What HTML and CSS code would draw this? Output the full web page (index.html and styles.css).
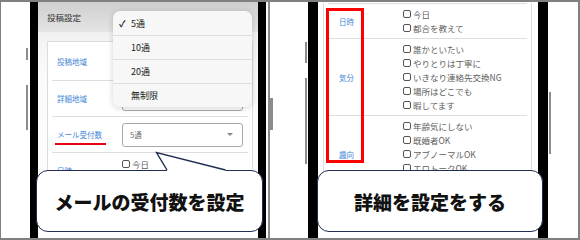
FILE: index.html
```html
<!DOCTYPE html>
<html lang="ja">
<head>
<meta charset="utf-8">
<title>設定</title>
<link rel="stylesheet" href="styles.css">
</head>
<body>
<div class="frame">
  <section class="panel panel-left">
    <div class="phone phone-left">
      <span class="side-btn lb1"></span>
      <span class="side-btn lb2"></span>
      <span class="side-btn lb3"></span>
      <div class="screen">
        <div class="app-header">投稿設定</div>
        <div class="content">
          <div class="card card-left">
            <div class="row row-first">
              <div class="label">投稿地域</div>
              <div class="field"><div class="select"></div></div>
            </div>
            <div class="row">
              <div class="label">詳細地域</div>
              <div class="field"><div class="select"></div></div>
            </div>
            <div class="row">
              <div class="label"><span class="underline">メール受付数</span></div>
              <div class="field"><div class="select"><span>5通</span><span class="caret"></span></div></div>
            </div>
            <div class="row">
              <div class="label">日時</div>
              <div class="field checks">
                <div class="check"><span class="box"></span>今日</div>
                <div class="check"><span class="box"></span>都合を教えて</div>
              </div>
            </div>
          </div>
        </div>
        <ul class="menu">
          <li><span class="tick">✓</span>5通</li>
          <li class="plain">10通</li>
          <li class="plain">20通</li>
          <li class="plain">無制限</li>
        </ul>
      </div>
    </div>
    <div class="bubble bubble-left">
      <svg class="tail" width="80" height="24" viewBox="0 0 80 24">
        <path d="M16 24 L16 20.5 L5.5 3.5 L74.5 20.5 L74.5 24 Z" fill="#fff"/>
        <polyline points="16,21 5.5,3.5 74.5,21" fill="none" stroke="#1f2d50" stroke-width="1.4"/>
      </svg>
      メールの受付数を設定
    </div>
  </section>

  <section class="panel panel-right">
    <div class="phone phone-right">
      <span class="side-btn rb1"></span>
      <span class="side-btn rb2"></span>
      <span class="side-btn rb3"></span>
      <div class="screen">
        <div class="content content-right">
          <div class="card card-right">
            <div class="row">
              <div class="label">日時</div>
              <div class="field checks">
                <div class="check"><span class="box"></span>今日</div>
                <div class="check"><span class="box"></span>都合を教えて</div>
              </div>
            </div>
            <div class="row">
              <div class="label">気分</div>
              <div class="field checks">
                <div class="check"><span class="box"></span>誰かといたい</div>
                <div class="check"><span class="box"></span>やりとりは丁寧に</div>
                <div class="check"><span class="box"></span>いきなり連絡先交換NG</div>
                <div class="check"><span class="box"></span>場所はどこでも</div>
                <div class="check"><span class="box"></span>暇してます</div>
              </div>
            </div>
            <div class="row">
              <div class="label">趣向</div>
              <div class="field checks">
                <div class="check"><span class="box"></span>年齢気にしない</div>
                <div class="check"><span class="box"></span>既婚者OK</div>
                <div class="check"><span class="box"></span>アブノーマルOK</div>
                <div class="check"><span class="box"></span>エロトークOK</div>
                <div class="check"><span class="box"></span>写メ交換OK</div>
              </div>
            </div>
          </div>
        </div>
        <div class="red-box"></div>
      </div>
    </div>
    <div class="bubble bubble-right">詳細を設定をする</div>
  </section>
</div>
</body>
</html>
```

FILE: styles.css
```css
* { box-sizing: border-box; }
html, body { margin: 0; padding: 0; background: #fff; }
body {
  width: 580px;
  height: 240px;
  overflow: hidden;
  font-family: "Noto Sans CJK JP", "Noto Sans", sans-serif;
}
.frame {
  width: 580px;
  height: 240px;
  border: 2px solid #808080;
  border-left-width: 1px;
  display: flex;
}
.panel {
  position: relative;
  height: 100%;
}
.panel-left {
  width: 269px;
  padding-left: 29px;
  border-right: 2px solid #8a8a8a;
}
.panel-right {
  flex: 1;
  padding-left: 38px;
}
.phone {
  position: relative;
  height: 100%;
  background: #000;
}
.phone-left { width: 236px; border-left: 8px solid #000; border-right: 8px solid #000; }
.phone-right { width: 240px; border-left: 10px solid #000; border-right: 10px solid #000; }

.side-btn { position: absolute; width: 2px; background: #8c8c8c; }
.lb1 { left: -12px; top: 46px; height: 12px; }
.lb2 { left: -12px; top: 83px; height: 45px; }
.lb3 { left: 232px; top: 96px; height: 32px; width: 3px; }
.rb1 { left: -13px; top: 40px; height: 21px; }
.rb2 { left: -13px; top: 76px; height: 86px; }
.rb3 { left: 231px; top: 90px; height: 62px; }

.screen {
  position: relative;
  width: 220px;
  height: 100%;
  background: #fff;
  overflow: hidden;
}
.app-header {
  height: 30px;
  line-height: 30px;
  padding-left: 9px;
  font-size: 8.5px;
  color: #333;
  background: linear-gradient(to bottom, #cfcfcf, #e4e4e4);
}
.content {
  padding: 9px 5px 0 9px;
  background: linear-gradient(to bottom, #f1f1f1, #fafafa 40px, #fff);
  height: 100%;
}
.card {
  background: #fff;
  border: 1px solid #dcdcdc;
  border-bottom: none;
}
.row {
  display: flex;
  align-items: center;
  margin: 0 4px;
  border-top: 1px solid #dedede;
}
.card-left .row { min-height: 36px; }
.card-left .row-first { border-top: none; min-height: 38px; }
.label {
  width: 70px;
  padding-left: 5px;
  font-size: 7.5px;
  color: #3f86d6;
  flex: none;
}
.field { flex: 1; }
.select {
  width: 121px;
  height: 24px;
  border: 1px solid #a8a8a8;
  border-radius: 3px;
  display: flex;
  align-items: center;
  justify-content: space-between;
  padding: 0 9px 0 7px;
  font-size: 7.5px;
  color: #6a6a6a;
}
.caret {
  width: 0;
  height: 0;
  border-left: 3px solid transparent;
  border-right: 3px solid transparent;
  border-top: 3px solid #888;
}
.underline { position: relative; }
.underline::after {
  content: "";
  position: absolute;
  left: -2px;
  right: -4px;
  top: calc(100% + 3px);
  height: 2px;
  background: #e60012;
}
.checks { padding: 3px 0; }
.check {
  height: 14px;
  display: flex;
  align-items: center;
  font-size: 8.5px;
  color: #5e5e5e;
  white-space: nowrap;
}
.box {
  width: 8px;
  height: 8px;
  border: 1px solid #555;
  border-radius: 2px;
  margin-right: 2px;
  flex: none;
}

.menu {
  position: absolute;
  left: 75px;
  top: 9px;
  width: 139px;
  margin: 0;
  padding: 0;
  list-style: none;
  background: #f7f7f7;
  border-radius: 7px;
  box-shadow: 0 1px 6px rgba(0, 0, 0, 0.18);
}
.menu li {
  height: 24px;
  display: flex;
  align-items: center;
  padding-left: 6px;
  font-size: 9px;
  color: #222;
  border-top: 1px solid #dedede;
}
.menu li:first-child { border-top: none; height: 24px; }
.menu li.plain { padding-left: 18px; }
.tick { width: 12px; font-size: 9px; font-weight: 700; }

.content-right { padding: 1px 6px 0 5px; background: #fff; }
.card-right { border-top: none; }
.card-right .label { width: 75px; padding-left: 11px; }

.red-box {
  position: absolute;
  left: 8px;
  top: 6px;
  width: 38px;
  height: 155px;
  border: 3px solid #ff0000;
}

.bubble {
  position: absolute;
  top: 168px;
  height: 62px;
  background: #fff;
  border: 1.5px solid #1f2d50;
  border-radius: 12px;
  display: flex;
  align-items: center;
  justify-content: center;
  font-size: 19px;
  font-weight: 900;
  color: #111;
  white-space: nowrap;
}
.bubble-left { left: 35px; width: 227px; }
.bubble-right { left: 47px; width: 226px; }
.tail {
  position: absolute;
  left: 114px;
  top: -22px;
}
```
